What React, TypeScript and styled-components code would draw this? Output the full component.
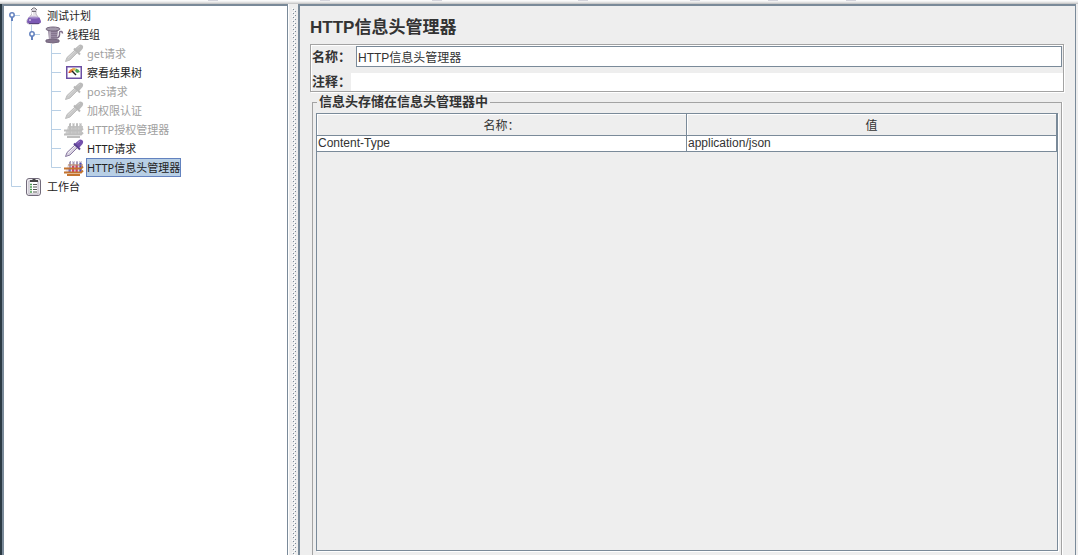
import React from 'react';
import styled, { createGlobalStyle, css } from 'styled-components';

const steel = '#7a8a99';
const etched = '#a3a3a3';
const guide = '#b8cfe5';
const panel = '#eeeeee';
const uiFont = '"Liberation Sans", "Noto Sans CJK SC", sans-serif';

const GlobalStyle = createGlobalStyle`
  * { box-sizing: border-box; }
  body { margin: 0; background: ${panel}; color: #333; font: 12px/16px ${uiFont}; }
  h1, ul, fieldset { margin: 0; padding: 0; }
  ul { list-style: none; }
`;

const Page = styled.div`
  display: flex;
  flex-direction: column;
  height: 100vh;
  overflow: hidden;
`;

const ToolStrip = styled.div`
  flex: none;
  display: flex;
  height: 4px;
  padding-left: 208px;
  border-bottom: 1px solid #c9c9c9;
  background: linear-gradient(#fbfbfb 0 1px, #f0f0f0 1px 2px, #e0e0e0 2px);
`;

const ToolEdge = styled.span<{ $gap: number }>`
  flex: none;
  width: 10px;
  height: 1px;
  margin-right: ${p => p.$gap}px;
  background: #d4d4dc;
`;

const Workspace = styled.div`
  flex: 1;
  min-height: 0;
  display: flex;
  border-left: 2px solid #2b3a44;
`;

const TreePane = styled.nav`
  width: 286px;
  flex: none;
  background: #fff;
  border: solid ${steel};
  border-width: 2px 1px 0 2px;
`;

const Divider = styled.div`
  flex: none;
  width: 10px;
  padding: 4px 0 0 3px;
  border-left: 1px solid #fff;
`;

const DividerDots = styled.div`
  width: 4px;
  height: 100%;
  background-image:
    conic-gradient(at 1px 1px, transparent 75%, ${steel} 0),
    conic-gradient(at 1px 1px, transparent 75%, ${steel} 0),
    conic-gradient(at 1px 1px, transparent 75%, #fff 0),
    conic-gradient(at 1px 1px, transparent 75%, #fff 0);
  background-size: 4px 4px;
  background-position: 1px 1px, 3px 3px, 0 0, 2px 2px;
`;

const Row = styled.li`
  display: flex;
  align-items: center;
  height: 19px;
`;

const BranchBox = styled.svg`
  flex: none;
  width: 20px;
  height: 19px;
`;

const IconBox = styled.svg`
  flex: none;
  width: 20px;
  height: 19px;
  margin-right: 2px;
`;

const Label = styled.button<{ $state?: 'disabled' | 'selected' }>`
  height: 19px;
  padding: 0;
  border: 1px solid transparent;
  background: none;
  color: #222;
  font: 11px/17px "Noto Sans", "Noto Sans CJK SC", sans-serif;
  white-space: nowrap;
  ${p => p.$state === 'disabled' && css`color: #a0a0a0;`}
  ${p => p.$state === 'selected' && css`
    background: ${guide};
    border-color: #6382bf;
  `}
`;

const Editor = styled.main`
  flex: 1;
  min-width: 0;
  margin-right: 2px;
  padding: 10px 11px 0 10px;
  display: flex;
  flex-direction: column;
  border: solid ${steel};
  border-width: 2px 1px 0 2px;
`;

const Title = styled.h1`
  font: bold 17px/24px ${uiFont};
  margin-bottom: 4px;
`;

const Properties = styled.div`
  border: 1px solid ${etched};
  box-shadow: 1px 1px 0 #fff, inset 1px 1px 0 #fff;
  padding: 1px 0 0 1px;
`;

const Field = styled.div<{ $gap?: boolean }>`
  display: flex;
  align-items: center;
  margin-bottom: ${p => (p.$gap ? 6 : 0)}px;
`;

const FieldLabel = styled.label<{ $width: number }>`
  flex: none;
  width: ${p => p.$width}px;
  font: bold 13px/18px ${uiFont};
`;

const TextInput = styled.input<{ $plain?: boolean }>`
  flex: 1;
  min-width: 0;
  height: ${p => (p.$plain ? 18 : 21)}px;
  margin-right: ${p => (p.$plain ? 0 : 1)}px;
  padding: 0 1px;
  border: ${p => (p.$plain ? '0' : `1px solid ${steel}`)};
  border-radius: 0;
  background: #fff;
  color: #333;
  font: 12px/16px ${uiFont};
  outline: none;
`;

const HeaderGroup = styled.fieldset`
  flex: 1;
  min-width: 0;
  min-height: 0;
  margin: 2px 2px 0;
  padding: 3px 3px 4px;
  border: solid ${etched};
  border-width: 1px 1px 0;
  box-shadow: 1px 0 0 #fff;
  display: flex;
`;

const Legend = styled.legend`
  margin-left: 1px;
  padding: 0 2px;
  font: bold 13px/16px ${uiFont};
`;

const TableFrame = styled.div`
  flex: 1;
  border: 1px solid ${steel};
  box-shadow: 1px 1px 0 #fff;
`;

const Table = styled.table`
  width: 100%;
  table-layout: fixed;
  border-collapse: separate;
  border-spacing: 0;
  th, td { padding: 0 1px; border: solid ${steel}; border-width: 0 1px 1px 0; }
  th { height: 22px; padding-top: 2px; font-weight: normal; box-shadow: inset 1px 1px 0 #fff; }
  td { height: 16px; line-height: 15px; background: #fff; }
`;

type BranchKind = 'root' | 'open' | 'pipe' | 'tee' | 'end' | 'none';

function Branch({ kind }: { kind: BranchKind }) {
  const lines = {
    root: 'M10 9.500H16M7.500 14V19',
    open: 'M7.500 0V8M10 9.500H16',
    pipe: 'M7.500 0V19',
    tee: 'M7.500 0V19M8 9.500H17',
    end: 'M7.500 0V9.500H17',
    none: '',
  }[kind];
  return (
    <BranchBox viewBox="0 0 20 19" aria-hidden="true">
      <path d={lines} fill="none" stroke={guide} />
      {(kind === 'root' || kind === 'open') && (
        <g>
          <path d="M8 10v5" stroke="#6382bf" strokeWidth="2" />
          <circle cx="8" cy="9" r="2.200" fill="#fff" stroke="#6382bf" strokeWidth="1.500" />
        </g>
      )}
    </BranchBox>
  );
}

type Kind = 'flask' | 'spool' | 'dropper' | 'gauge' | 'rack' | 'clipboard';

function Icon({ kind, off }: { kind: Kind; off?: boolean }) {
  const c = (on: string, gray = '#c0c0c0') => (off ? gray : on);
  return (
    <IconBox viewBox="0 0 20 19" aria-hidden="true">
      {kind === 'flask' && (
        <g>
          <path d="M8 4h4v4l4 6q1 4-2 4H5q-3 0-2-4l5-6z" fill="#e6e3e8" stroke="#bdb6c3" />
          <path d="M4.500 11.500h11l1.500 4q0 2-2 2H5q-2 0-2-2z" fill="#7c5ab5" />
          <path d="M5 17.500h10" stroke="#57417d" />
          <ellipse cx="10" cy="11.500" rx="5" ry="1" fill="#a791cc" />
          <path d="M7 4l2-2h2l2 2M8 5.500h4" fill="none" stroke="#77727b" />
          <path d="M8.500 6v3M6 13v2" stroke="#fff" />
        </g>
      )}
      {kind === 'spool' && (
        <g>
          <path d="M4 4h10l-1 11H5z" fill="#85758e" />
          <path d="M5 6h2v9H5z" fill="#b3a8ba" />
          <path d="M7 7.500h6M7 9.500h6M7 11.500h6M7 13.500h6" stroke="#998ba3" />
          <ellipse cx="9" cy="4" rx="7" ry="2" fill="#a39aab" stroke="#75677e" />
          <path d="M2 15q7-2 13 0v2q-6 2-13 0z" fill="#85758e" stroke="#75677e" />
          <path d="M13 13q3-1 2.500-5q0-2 2-1.500q1 .5 1 2" fill="none" stroke="#806f8b" strokeWidth="1.500" />
        </g>
      )}
      {kind === 'dropper' && (
        <g>
          <path d="M1.500 17.500L3 13.500L11 6l2.500 2.500L6 16z" fill={c('#d8d2e0', '#c9c9c9')} stroke={c('#8878a0', '#bdbdbd')} />
          <path d="M11 7l-7 7" stroke={c('#f4f1f8', '#d6d6d6')} />
          <path d="M11 4.500l3.500-3Q16 0 18 1t.500 4L15 9z" fill={c('#7450ac', '#bbbbbb')} />
          <path d="M10 4.500l6 6" stroke={c('#5a4191', '#b8b8b8')} strokeWidth="2" />
          <path d="M13.500 4l2.500-2" stroke={c('#a58acb', '#cccccc')} />
        </g>
      )}
      {kind === 'gauge' && (
        <g>
          <rect x="2.750" y="3.750" width="14.500" height="11.500" fill="#fff" stroke="#6c4fa4" strokeWidth="1.500" />
          <path d="M4.500 9q1-3 4-3.500l1 3-2 1z" fill="#e57b32" />
          <path d="M8 5.500q2-1 4 0l-2 3z" fill="#e8b04b" />
          <path d="M12 5.500q3 .5 4 3.500l-3 1-2-2z" fill="#4ba451" />
          <path d="M8 8l4 4" stroke="#222" strokeWidth="1.500" />
          <path d="M4.500 9.500h2" stroke="#d63b30" />
        </g>
      )}
      {kind === 'rack' && (
        <g>
          <path d="M4 6h15l-1 4H3zM2 11h16v4H1z" fill={c('#e2dce8', '#cccccc')} />
          <path d="M6 3v12M9.500 3v12M13 3v12M16.500 3v12" stroke={c('#a49bb8', '#bdbdbd')} strokeWidth="2" />
          <path d="M9 8v7M12.500 7v7" stroke={c('#cf3f68', '#c4c4c4')} strokeWidth="2" />
          <path d="M16.500 5v9" stroke={c('#4a4cc4', '#c4c4c4')} strokeWidth="2" />
          <path d="M5.500 10v4" stroke={c('#7869bb', '#c4c4c4')} strokeWidth="2" />
          <path d="M4 7h15" stroke={c('#c48a5a', '#bdbdbd')} />
          <path d="M0 10.500h17l2-2" fill="none" stroke={c('#c4742f', '#bdbdbd')} strokeWidth="2" />
          <path d="M0 14.500h17l2-2M3 17h13" fill="none" stroke={c('#c4742f', '#bdbdbd')} strokeWidth="2" />
          <path d="M5 3.500h1M9 3.500h1M12.500 3.500h1M16 3.500h1" stroke={c('#e5e1ec', '#dddddd')} />
        </g>
      )}
      {kind === 'clipboard' && (
        <g>
          <rect x="2.500" y="1.500" width="14" height="17" rx="2.500" fill="#eeebf0" stroke="#716a7a" />
          <path d="M5 4h9v13H5z" fill="#fff" stroke="#b6b0bd" />
          <path d="M6 3h2l1-1h2l1 1h2v2H6z" fill="#444" />
          <path d="M9 7.500h4M9 10h4M9 12.500h4M9 15h4" stroke="#555" />
          <path d="M6 7.500h2M6 10h2M6 12.500h2M6 15h2" stroke="#4d9c53" strokeWidth="1.500" />
        </g>
      )}
    </IconBox>
  );
}

interface Node {
  text: string;
  icon: Kind;
  branches: BranchKind[];
  state?: 'disabled' | 'selected';
}

const nodes: Node[] = [
  { text: '测试计划', icon: 'flask', branches: ['root'] },
  { text: '线程组', icon: 'spool', branches: ['pipe', 'open'] },
  { text: 'get请求', icon: 'dropper', branches: ['pipe', 'none', 'tee'], state: 'disabled' },
  { text: '察看结果树', icon: 'gauge', branches: ['pipe', 'none', 'tee'] },
  { text: 'pos请求', icon: 'dropper', branches: ['pipe', 'none', 'tee'], state: 'disabled' },
  { text: '加权限认证', icon: 'dropper', branches: ['pipe', 'none', 'tee'], state: 'disabled' },
  { text: 'HTTP授权管理器', icon: 'rack', branches: ['pipe', 'none', 'tee'], state: 'disabled' },
  { text: 'HTTP请求', icon: 'dropper', branches: ['pipe', 'none', 'tee'] },
  { text: 'HTTP信息头管理器', icon: 'rack', branches: ['pipe', 'none', 'end'], state: 'selected' },
  { text: '工作台', icon: 'clipboard', branches: ['end'] },
];

const toolGaps = [102, 102, 136, 102, 68, 68, 0];

export default function App() {
  return (
    <Page lang="zh-CN">
      <GlobalStyle />
      <ToolStrip>
        {toolGaps.map((gap, i) => <ToolEdge key={i} $gap={gap} />)}
      </ToolStrip>
      <Workspace>
        <TreePane>
          <ul>
            {nodes.map(node => (
              <Row key={node.text}>
                {node.branches.map((kind, i) => <Branch key={i} kind={kind} />)}
                <Icon kind={node.icon} off={node.state === 'disabled'} />
                <Label type="button" $state={node.state}>{node.text}</Label>
              </Row>
            ))}
          </ul>
        </TreePane>
        <Divider><DividerDots /></Divider>
        <Editor>
          <Title>HTTP信息头管理器</Title>
          <Properties>
            <Field $gap>
              <FieldLabel $width={44} htmlFor="name">名称：</FieldLabel>
              <TextInput id="name" defaultValue="HTTP信息头管理器" />
            </Field>
            <Field>
              <FieldLabel $width={39} htmlFor="comment">注释：</FieldLabel>
              <TextInput id="comment" $plain />
            </Field>
          </Properties>
          <HeaderGroup>
            <Legend>信息头存储在信息头管理器中</Legend>
            <TableFrame>
              <Table>
                <thead><tr><th scope="col">名称：</th><th scope="col">值</th></tr></thead>
                <tbody><tr><td>Content-Type</td><td>application/json</td></tr></tbody>
              </Table>
            </TableFrame>
          </HeaderGroup>
        </Editor>
      </Workspace>
    </Page>
  );
}
